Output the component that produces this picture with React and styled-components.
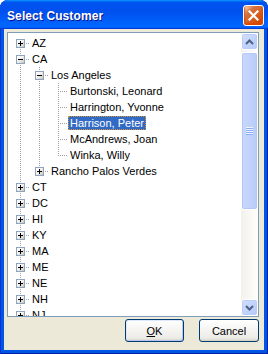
import React from 'react';
import styled, { createGlobalStyle, css } from 'styled-components';

const GlobalStyle = createGlobalStyle`
  html, body { margin: 0; padding: 0; background: #ffffff; }
  body { font-family: "Liberation Sans", Arial, sans-serif; }
  #root { width: 268px; height: 354px; }
`;

const Window = styled.div`
  width: 268px;
  height: 354px;
  box-sizing: border-box;
  display: flex;
  flex-direction: column;
  background: #0055e5;
  border-radius: 8px 8px 0 0;
  box-shadow: inset 1px 0 #0831d9, inset -1px 0 #001ea0, inset 0 -1px #001ea0;
  overflow: hidden;
`;

const TitleBar = styled.div`
  height: 29px;
  flex: none;
  box-sizing: border-box;
  display: flex;
  align-items: center;
  padding: 2px 4px 0 7px;
  background: linear-gradient(180deg, #0997ff, #0053ee 8%, #0050ee 40%, #0066ff 88%, #0066ff 93%, #005bff 95%, #003dd7 96%, #003dd7);
  border-radius: 8px 8px 0 0;
`;

const TitleText = styled.span`
  flex: 1;
  color: #ffffff;
  font-family: "Liberation Sans", Arial, sans-serif;
  font-weight: bold;
  font-size: 12px;
  letter-spacing: 0.1px;
  line-height: 14px;
  margin-top: 1px;
  text-shadow: 1px 1px #0f1089;
`;

const CloseButton = styled.div`
  width: 21px;
  height: 21px;
  box-sizing: border-box;
  flex: none;
  display: flex;
  align-items: center;
  justify-content: center;
  border: 1px solid #ffffff;
  border-radius: 3px;
  background-image: radial-gradient(circle at 90% 90%, #cc4600 0, #dc6527 55%, #cd7546 70%, #ffccb2 90%, #ffffff 100%);
  box-shadow: inset 0 -1px 2px 1px #da4600;
`;

const Body = styled.div`
  flex: 1;
  min-height: 0;
  margin: 0 4px 4px;
  background: #ece9d8;
  display: flex;
  flex-direction: column;
  padding: 3px 5px 8px 3px;
`;

const Panel = styled.div`
  flex: 1;
  min-height: 0;
  display: flex;
  background: #ffffff;
  border: 1px solid #7f9db9;
`;

const Tree = styled.div`
  flex: 1;
  min-width: 0;
  overflow: hidden;
  padding: 2px 0 0 3px;
`;

const Row = styled.div`
  display: flex;
  align-items: center;
  height: 16px;
  white-space: nowrap;
`;

const dotV = 'repeating-linear-gradient(to bottom, #a0a0a0 0 1px, transparent 1px 2px)';
const dotH = 'repeating-linear-gradient(to right, #a0a0a0 0 1px, transparent 1px 2px)';

const guideLayers = ({ $up, $down, $across }) => {
  const layers = [];
  if ($up) layers.push([dotV, '1px 8px', '9px 0']);
  if ($down) layers.push([dotV, '1px 8px', '9px 8px']);
  if ($across) layers.push([dotH, '10px 1px', '9px 8px']);
  if (!layers.length) return css`background: none;`;
  return css`
    background-image: ${layers.map((l) => l[0]).join(', ')};
    background-size: ${layers.map((l) => l[1]).join(', ')};
    background-position: ${layers.map((l) => l[2]).join(', ')};
    background-repeat: no-repeat;
  `;
};

const Guide = styled.span`
  flex: none;
  width: 19px;
  height: 16px;
  display: flex;
  align-items: center;
  justify-content: flex-start;
  padding-left: 5px;
  box-sizing: border-box;
  ${guideLayers}
`;

const Expander = styled.span`
  width: 9px;
  height: 9px;
  box-sizing: border-box;
  display: flex;
  align-items: center;
  justify-content: center;
  border: 1px solid #8ea3bf;
  background: linear-gradient(135deg, #ffffff 0%, #f4f3ee 45%, #c9c4b4 100%);
`;

const Label = styled.span`
  font-family: "Liberation Sans", Arial, sans-serif;
  font-size: 11px;
  line-height: 12px;
  padding: 0 1px;
  border: 1px solid transparent;
  color: #000000;
  ${(p) =>
    p.$selected &&
    css`
      background: #316ac5;
      color: #ffffff;
      border: 1px dotted #ce953a;
    `}
`;

const ScrollBar = styled.div`
  width: 17px;
  flex: none;
  display: flex;
  flex-direction: column;
  background: linear-gradient(to right, #f3f1ec, #fefefb);
`;

const ScrollButton = styled.div`
  height: 17px;
  flex: none;
  box-sizing: border-box;
  display: flex;
  align-items: center;
  justify-content: center;
  border: 1px solid #ffffff;
  border-radius: 3px;
  background: linear-gradient(135deg, #d3e0fd 0%, #c2d4fb 50%, #b3c9f8 100%);
  box-shadow: inset 0 0 0 1px #b9cdf7;
`;

const Track = styled.div`
  flex: 1;
  min-height: 0;
  display: flex;
  flex-direction: column;
`;

const Thumb = styled.div`
  flex: none;
  box-sizing: border-box;
  margin-top: ${(p) => p.$offset}px;
  height: ${(p) => p.$size}px;
  display: flex;
  align-items: center;
  justify-content: center;
  border: 1px solid #ffffff;
  border-radius: 3px;
  background: linear-gradient(to right, #c9d8fd 0%, #c1d3fc 50%, #b6cbf8 100%);
  box-shadow: inset 0 0 0 1px #b3c7f5;
`;

const Grip = styled.span`
  width: 7px;
  height: 8px;
  background: repeating-linear-gradient(to bottom, #eef4fe 0 1px, #8caff3 1px 2px);
`;

const ButtonRow = styled.div`
  flex: none;
  display: flex;
  justify-content: flex-end;
  gap: 15px;
  margin-top: 2px;
`;

const Button = styled.button`
  width: ${(p) => p.$width}px;
  height: 23px;
  box-sizing: border-box;
  padding: 0;
  font-family: "Liberation Sans", Arial, sans-serif;
  font-size: 11px;
  color: #000000;
  border: 1px solid #003c74;
  border-radius: 3px;
  background: linear-gradient(180deg, #ffffff, #ecebe6 86%, #d6d0c5);
  ${(p) =>
    p.$default &&
    css`
      box-shadow: inset -1px -1px #b4c6ef, inset 1px 1px #dde8fb;
    `}
`;

const Key = styled.span`
  text-decoration: underline;
`;

const Chevron = ({ down }) => (
  <svg width="9" height="6" viewBox="0 0 9 6">
    <polyline
      points={down ? '1,1 4.5,4.5 8,1' : '1,5 4.5,1.5 8,5'}
      fill="none"
      stroke="#4d6185"
      strokeWidth="2"
    />
  </svg>
);

const Sign = ({ open }) => (
  <svg width="7" height="7" viewBox="0 0 7 7">
    <rect x="1" y="3" width="5" height="1" fill="#000" />
    {!open && <rect x="3" y="1" width="1" height="5" fill="#000" />}
  </svg>
);

const CloseGlyph = () => (
  <svg width="11" height="11" viewBox="0 0 11 11">
    <path d="M1.5 1.5 L9.5 9.5 M9.5 1.5 L1.5 9.5" stroke="#ffffff" strokeWidth="2.2" strokeLinecap="square" />
  </svg>
);

const leaf = (label, extra = {}) => ({ label, ...extra });
const closed = (label, extra = {}) => ({ label, expandable: true, ...extra });

const data = [
  closed('AZ'),
  {
    label: 'CA',
    expandable: true,
    open: true,
    children: [
      {
        label: 'Los Angeles',
        expandable: true,
        open: true,
        children: [
          leaf('Burtonski, Leonard'),
          leaf('Harrington, Yvonne'),
          leaf('Harrison, Peter', { selected: true }),
          leaf('McAndrews, Joan'),
          leaf('Winka, Willy'),
        ],
      },
      closed('Rancho Palos Verdes'),
    ],
  },
  closed('CT'),
  closed('DC'),
  closed('HI'),
  closed('KY'),
  closed('MA'),
  closed('ME'),
  closed('NE'),
  closed('NH'),
  closed('NJ', { more: true }),
];

const flatten = (nodes, depth = 0, trail = [], out = []) => {
  nodes.forEach((node, i) => {
    const hasNext = i < nodes.length - 1 || !!node.more;
    out.push({
      node,
      depth,
      trail,
      up: !(depth === 0 && i === 0),
      down: hasNext,
    });
    if (node.open && node.children) {
      flatten(node.children, depth + 1, [...trail, hasNext], out);
    }
  });
  return out;
};

const rows = flatten(data);

export default function App() {
  return (
    <>
      <GlobalStyle />
      <Window>
        <TitleBar>
          <TitleText>Select Customer</TitleText>
          <CloseButton>
            <CloseGlyph />
          </CloseButton>
        </TitleBar>
        <Body>
          <Panel>
            <Tree>
              {rows.map(({ node, depth, trail, up, down }, idx) => (
                <Row key={idx}>
                  {trail.map((cont, a) => (
                    <Guide key={a} $up={cont} $down={cont} />
                  ))}
                  <Guide $up={up} $down={down} $across>
                    {node.expandable && (
                      <Expander>
                        <Sign open={node.open} />
                      </Expander>
                    )}
                  </Guide>
                  <Label $selected={node.selected}>{node.label}</Label>
                </Row>
              ))}
            </Tree>
            <ScrollBar>
              <ScrollButton>
                <Chevron />
              </ScrollButton>
              <Track>
                <Thumb $offset={2} $size={158}>
                  <Grip />
                </Thumb>
              </Track>
              <ScrollButton>
                <Chevron down />
              </ScrollButton>
            </ScrollBar>
          </Panel>
          <ButtonRow>
            <Button $width={59} $default>
              <Key>O</Key>K
            </Button>
            <Button $width={60}>Cancel</Button>
          </ButtonRow>
        </Body>
      </Window>
    </>
  );
}
